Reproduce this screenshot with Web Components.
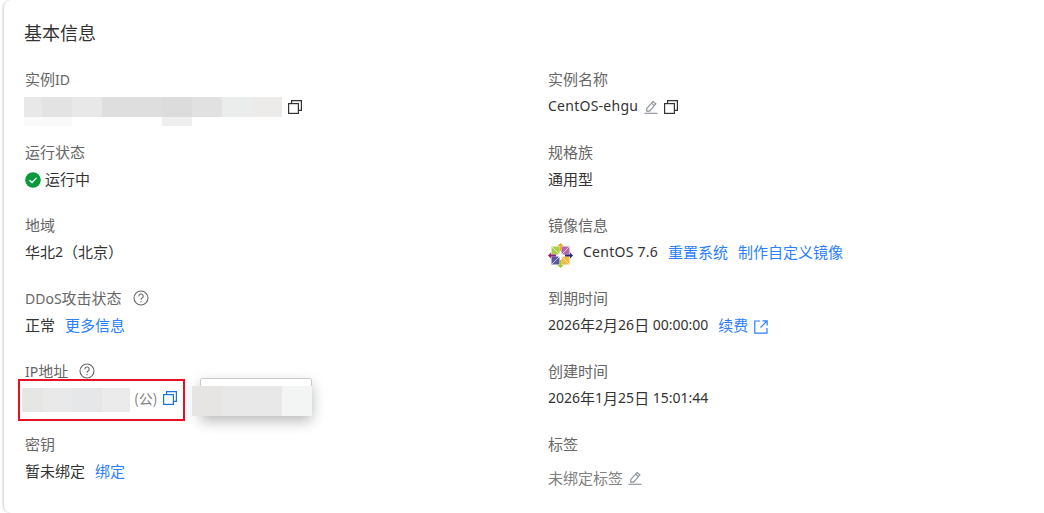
<!DOCTYPE html>
<html lang="zh"><head><meta charset="utf-8"><title>基本信息</title>
<style>
html,body{margin:0;padding:0;background:#fff;width:1044px;height:513px;overflow:hidden}
body{font:15px/22px "Noto Sans CJK SC",sans-serif;color:#333}
.la{font:14px/22px "Noto Sans","Noto Sans CJK SC",sans-serif}
.ls{letter-spacing:.25px}
.i1{margin-top:2px}
.tag{display:inline-flex;align-items:center;margin-top:14px}
</style></head><body>
<info-card heading="基本信息">
  <info-field label="实例<b>ID</b>">
    <span style="display:inline-flex;align-items:center;gap:6px;margin-left:-1px;margin-top:2px">
      <mosaic-block data-h="20" data-w="18:e8e8e8,30:e2e3e2,30:e8e8e8,60:dedede,30:dcdcdc,30:e1e1e1,30:ebecec,30:ecebea" data-sub="18:fafafa,30:f9f9f9,90:ffffff,30:efefef" data-subh="9"></mosaic-block>
      <ui-icon name="copy"></ui-icon>
    </span>
  </info-field>
  <info-field label="实例名称"><span class="la ls">CentOS-ehgu</span><ui-icon class="i1" name="edit" style="color:#8a8f99;margin-left:6px"></ui-icon><ui-icon class="i1" name="copy" style="margin-left:6px"></ui-icon></info-field>
  <info-field label="运行状态"><ui-icon class="i1" name="ok" style="margin-right:4px"></ui-icon>运行中</info-field>
  <info-field label="规格族">通用型</info-field>
  <info-field label="地域">华北<span class="la">2</span>（北京）</info-field>
  <info-field label="镜像信息"><ui-icon name="centos" style="margin-right:10px;margin-top:6px"></ui-icon><span class="la ls">CentOS 7.6</span><info-link style="margin-left:10px">重置系统</info-link><info-link style="margin-left:10px">制作自定义镜像</info-link></info-field>
  <info-field label="<b>DDoS</b>攻击状态" help>正常<info-link style="margin-left:10px">更多信息</info-link></info-field>
  <info-field label="到期时间"><span class="la">2026</span>年<span class="la">2</span>月<span class="la">26</span>日<span class="la">&nbsp;00:00:00</span><info-link style="margin-left:10px">续费</info-link><ui-icon name="ext" style="margin-left:6px;margin-top:3px;color:#2b7fff"></ui-icon></info-field>
  <info-field label="<b>IP</b>地址" help>
    <ip-value></ip-value>
  </info-field>
  <info-field label="创建时间"><span class="la">2026</span>年<span class="la">1</span>月<span class="la">25</span>日<span class="la">&nbsp;15:01:44</span></info-field>
  <info-field label="密钥">暂未绑定<info-link style="margin-left:10px">绑定</info-link></info-field>
  <info-field label="标签"><span class="tag"><span style="color:#808080">未绑定标签</span><ui-icon name="edit" style="color:#8a8f99;margin-left:5px"></ui-icon></span></info-field>
</info-card>
<script>
const ICONS={
copy:'<svg width="14" height="14" viewBox="0 0 14 14" fill="none" stroke="currentColor" stroke-width="1.2"><rect x=".6" y="3.600" width="9.800" height="9.800"/><path d="M3.600 3.600V.6h9.800v9.800H10.400"/></svg>',
edit:'<svg width="14" height="14" viewBox="0 0 14 14" fill="none" stroke="currentColor" stroke-width="1.100"><path d="M2.700 8.700 9 1.500l2.900 2.400-6.300 7.200H2.700z"/><path d="M7.500 3.200l2.900 2.400"/><path d="M.5 13.300h13"/></svg>',
ok:'<svg width="16" height="16" viewBox="0 0 16 16"><circle cx="8" cy="8" r="7.800" fill="#0a9a3c"/><path d="M4.500 8.200 7 10.500l4.500-4.600" fill="none" stroke="#fff" stroke-width="1.300"/></svg>',
ext:'<svg width="14" height="14" viewBox="0 0 14 14" fill="none" stroke="currentColor" stroke-width="1.200"><path d="M6 1H.8v12.200H13V8"/><path d="M6.500 7.500 13 1M8.500 .8H13.200V5.500"/></svg>',
help:'<svg width="16" height="16" viewBox="0 0 16 16" fill="none" stroke="#666" stroke-width="1.100"><circle cx="8" cy="8" r="7"/><path d="M5.800 6.300A2.200 2.200 0 1 1 8.800 8.300C8.200 8.600 8 9 8 9.800"/><path d="M8 11v1.300"/></svg>',
centos:'<svg width="25" height="25" viewBox="0 0 25 25"><path fill="#a8d047" d="M3.500 3.500h8v8h-8z"/><path fill="#b565a7" d="M13.500 3.500h8v8h-8z"/><path fill="#f4b93e" d="M13.500 13.500h8v8h-8z"/><path fill="#5a57a0" d="M3.500 13.500h8v8h-8z"/><path fill="#efa724" d="M12.500 0l3 3h-2v5h-2V3h-2z"/><path fill="#9ccd2a" d="M12.500 25l3-3h-2v-5h-2v5h-2z"/><path fill="#932279" d="M0 12.500l3-3v2h5v2H3v2z"/><path fill="#262577" d="M25 12.500l-3-3v2h-5v2h5v2z"/><path stroke="#fff" stroke-width=".8" stroke-opacity=".8" fill="none" d="M4 4l17 17M21 4 4 21"/><path fill="#fff" d="M10.500 10.500h4v4h-4z"/></svg>'
};
const sh=(el,html)=>{el.attachShadow({mode:'open'}).innerHTML=html};
customElements.define('ui-icon',class extends HTMLElement{connectedCallback(){
 sh(this,'<style>:host{display:inline-flex;vertical-align:middle}</style>'+ICONS[this.getAttribute('name')]);}});
customElements.define('info-link',class extends HTMLElement{connectedCallback(){
 sh(this,'<style>:host{display:inline;color:#2b7fff;cursor:pointer}</style><slot></slot>');}});
customElements.define('mosaic-block',class extends HTMLElement{connectedCallback(){
 const row=(s,h)=>'<div class="r" style="height:'+h+'px">'+s.split(',').map(c=>{const[w,col]=c.split(':');return '<i style="width:'+w+'px;background:#'+col+'"></i>'}).join('')+'</div>';
 let h=row(this.dataset.w,this.dataset.h);
 if(this.dataset.sub)h+='<div class="o">'+row(this.dataset.sub,this.dataset.subh)+'</div>';
 sh(this,'<style>:host{display:block;position:relative}.r{display:flex}i{display:block}.o{position:absolute;left:0;top:100%}</style>'+h);}});
customElements.define('info-field',class extends HTMLElement{connectedCallback(){
 const q=this.hasAttribute('help')?'<span class="h">'+ICONS.help+'</span>':'';
 sh(this,`<style>:host{display:block;height:73px}
 .l{color:#666;height:25px;padding-top:1px;line-height:22px;display:flex;align-items:flex-start;white-space:nowrap}
 b{font:14px/22px "Noto Sans","Noto Sans CJK SC",sans-serif}
 .h{margin-left:11px;display:inline-flex;margin-top:3px}
 .v{color:#333;line-height:22px;height:26px;display:flex;align-items:center;white-space:nowrap;position:relative}
 </style><div class="l"><span>${this.getAttribute('label')}</span>${q}</div><div class="v"><slot></slot></div>`);}});
customElements.define('ip-value',class extends HTMLElement{connectedCallback(){
 sh(this,`<style>:host{display:flex;align-items:center;position:relative;color:#808080;margin-left:-3px}
 .box{position:absolute;left:-4px;top:-5px;width:163px;height:38px;border:2px solid #e81123}
 .pop{position:absolute;left:178px;top:-6px;width:112px;height:37px;background:#fff;border:1px solid #ccc;border-radius:2px;box-shadow:0 6px 14px rgba(0,0,0,.28);box-sizing:border-box}
 .cover{position:absolute;left:164px;top:2px;display:flex;z-index:1}
 .m{margin-top:4px}
 .pub{margin-left:4px;font-size:14px;white-space:nowrap}
 ui-icon{color:#1f72d8;margin-left:6px}
 </style>
 <mosaic-block class="m" data-h="24" data-w="20:e6e6e4,30:e9e9e9,30:e6e7e9,28:ebebeb"></mosaic-block><span class="pub">(公)</span><ui-icon name="copy"></ui-icon>
 <div class="pop"></div><mosaic-block class="cover" data-h="30" data-w="6:f5f8fc,30:e6e5e4,30:e8e8e8,30:e8e8e8,30:f3f4f4"></mosaic-block>
 <div class="box"></div>`);}});
customElements.define('info-card',class extends HTMLElement{connectedCallback(){
 sh(this,`<style>:host{display:block;box-sizing:border-box;margin-left:3px;height:513px;background:#fff;border-left:1px solid #ddd;border-radius:8px 0 0 8px;padding:20px 0 0 21px;box-shadow:-1px 0 2px rgba(0,0,0,.08)}
 h2{margin:-1px 0 22px -1px;font-size:18px;font-weight:400;line-height:26px;color:#333}
 .g{display:grid;grid-template-columns:523px 1fr}</style>
 <h2>${this.getAttribute('heading')}</h2><div class="g"><slot></slot></div>`);}});
</script>
</body></html>
